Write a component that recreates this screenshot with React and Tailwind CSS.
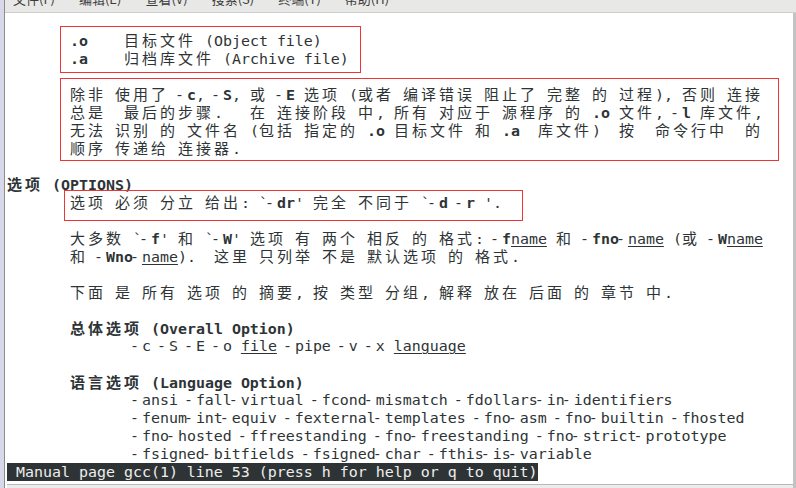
import clsx from 'clsx';

const menus = ['文件(F)', '编辑(E)', '查看(V)', '搜索(S)', '终端(T)', '帮助(H)'];

// one string per terminal row; *bold*, _underline_
const rows = [
  '',
  '       *.o*    目标文件 (Object file)',
  '       *.a*    归档库文件 (Archive file)',
  '',
  '       除非 使用了 -*c*, -*S*, 或 -*E* 选项 (或者 编译错误 阻止了 完整 的 过程), 否则 连接',
  '       总是  最后的步骤.   在 连接阶段 中, 所有 对应于 源程序 的 *.o* 文件, -*l* 库文件,',
  '       无法 识别 的 文件名 (包括 指定的 *.o* 目标文件 和 *.a*  库文件)  按  命令行中  的',
  '       顺序 传递给 连接器.',
  '',
  '*选项 (OPTIONS)*',
  "       选项 必须 分立 给出: `-*dr*' 完全 不同于 `-*d* -*r* '.",
  '',
  "       大多数 `-*f*' 和 `-*W*' 选项 有 两个 相反 的 格式: -*f*_name_ 和 -*fno-*_name_ (或 -*W*_name_",
  '       和 -*Wno-*_name_).  这里 只列举 不是 默认选项 的 格式.',
  '',
  '       下面 是 所有 选项 的 摘要, 按 类型 分组, 解释 放在 后面 的 章节 中.',
  '',
  '       *总体选项 (Overall Option)*',
  '              -c -S -E -o _file_ -pipe -v -x _language_',
  '',
  '       *语言选项 (Language Option)*',
  '              -ansi -fall-virtual -fcond-mismatch -fdollars-in-identifiers',
  '              -fenum-int-equiv -fexternal-templates -fno-asm -fno-builtin -fhosted',
  '              -fno-hosted -ffreestanding -fno-freestanding -fno-strict-prototype',
  '              -fsigned-bitfields -fsigned-char -fthis-is-variable',
];

const isWide = (ch) => ch.charCodeAt(0) >= 0x2e80;

function splitRuns(str) {
  const parts = [];
  let b = false;
  let u = false;
  for (const ch of str) {
    if (ch === '*') { b = !b; continue; }
    if (ch === '_') { u = !u; continue; }
    const kind = isWide(ch) ? 'wide' : ch === '-' ? 'dash' : 'text';
    const last = parts[parts.length - 1];
    if (kind === 'text' && last && last.kind === 'text' && last.b === b && last.u === u) {
      last.s += ch;
    } else {
      parts.push({ kind, s: ch, b, u });
    }
  }
  return parts;
}

const TermRow = ({ text }) => (
  <div className="h-[18px] leading-[18px] whitespace-pre">
    {splitRuns(text).map((p, i) => {
      if (p.kind === 'wide') {
        return (
          <span key={i} className={clsx("inline-block w-[18px] font-['Noto_Sans_CJK_SC',sans-serif] text-[15px]", p.b && 'font-bold')}>
            {p.s}
          </span>
        );
      }
      if (p.kind === 'dash') {
        return (
          <span key={i} className="inline-block w-[9px] -translate-x-[3px]">-</span>
        );
      }
      return (
        <span key={i} className={clsx(p.b && 'font-bold', p.u && 'underline underline-offset-[2px] decoration-1')}>
          {p.s}
        </span>
      );
    })}
  </div>
);

const App = () => {
  return (
    <div className="relative w-[796px] h-[488px] overflow-hidden bg-white flex">
      {/* window edge */}
      <div className="w-[4px] bg-[#d7d9ea] shrink-0" />
      <div className="w-px bg-[#8c8c8c] shrink-0" />

      <div className="flex-1 flex flex-col min-w-0">
        {/* menu bar, cut off at the top */}
        <div className="h-[13px] bg-[#e8e8e7] border-b border-[#cfcfcf] overflow-hidden shrink-0">
          <div className="flex gap-[24px] pl-[8px] -mt-[9px] font-['Noto_Sans_CJK_SC',sans-serif] text-[13px] leading-[16px] text-[#3c3c3c]">
            {menus.map((m) => (
              <span key={m}>{m}</span>
            ))}
          </div>
        </div>

        <div className="flex flex-1 min-h-0">
          {/* terminal text */}
          <div className="flex-1 flex flex-col pl-[2px] font-['DejaVu_Sans_Mono',monospace] text-[14.95px] text-[#2e3436]">
            {rows.map((r, i) => (
              <TermRow key={i} text={r} />
            ))}
            <div className="h-[18px] leading-[18px] whitespace-pre">
              <span className="bg-[#2e3436] text-[#eeeeec]"> Manual page gcc(1) line 53 (press h for help or q to quit)</span>
            </div>
            <div className="flex-1 flex flex-col">
              <div className="h-[3px]" />
              <div className="h-px bg-[#b9b9b9]" />
              <div className="flex-1 bg-[#ececec]" />
            </div>
          </div>
          {/* scrollbar */}
          <div className="w-[3px] bg-[#c3c3c3] shrink-0" />
        </div>
      </div>

      {/* red annotation boxes */}
      <div className="absolute left-[60px] top-[26px] w-[301px] h-[47px] border border-solid border-[#ee3434]" />
      <div className="absolute left-[60px] top-[78px] w-[719px] h-[83px] border border-solid border-[#ee3434]" />
      <div className="absolute left-[64px] top-[190px] w-[459px] h-[31px] border border-solid border-[#ee3434]" />
    </div>
  );
};

export default App;
